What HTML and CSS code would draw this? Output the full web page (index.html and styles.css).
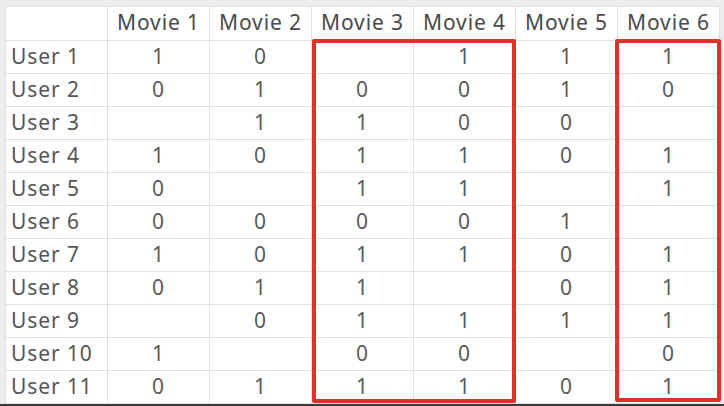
FILE: index.html
```html
<!DOCTYPE html>
<html>
<head>
<meta charset="utf-8">
<link rel="stylesheet" href="styles.css">
</head>
<body>
<div class="frame">
  <div class="sheet">
    <table class="grid">
      <thead>
        <tr><th class="corner"></th><th>Movie 1</th><th>Movie 2</th><th>Movie 3</th><th>Movie 4</th><th>Movie 5</th><th>Movie 6</th></tr>
      </thead>
      <tbody>
        <tr><td class="user">User 1</td><td>1</td><td>0</td><td></td><td>1</td><td>1</td><td>1</td></tr>
        <tr><td class="user">User 2</td><td>0</td><td>1</td><td>0</td><td>0</td><td>1</td><td>0</td></tr>
        <tr><td class="user">User 3</td><td></td><td>1</td><td>1</td><td>0</td><td>0</td><td></td></tr>
        <tr><td class="user">User 4</td><td>1</td><td>0</td><td>1</td><td>1</td><td>0</td><td>1</td></tr>
        <tr><td class="user">User 5</td><td>0</td><td></td><td>1</td><td>1</td><td></td><td>1</td></tr>
        <tr><td class="user">User 6</td><td>0</td><td>0</td><td>0</td><td>0</td><td>1</td><td></td></tr>
        <tr><td class="user">User 7</td><td>1</td><td>0</td><td>1</td><td>1</td><td>0</td><td>1</td></tr>
        <tr><td class="user">User 8</td><td>0</td><td>1</td><td>1</td><td></td><td>0</td><td>1</td></tr>
        <tr><td class="user">User 9</td><td></td><td>0</td><td>1</td><td>1</td><td>1</td><td>1</td></tr>
        <tr><td class="user">User 10</td><td>1</td><td></td><td>0</td><td>0</td><td></td><td>0</td></tr>
        <tr><td class="user">User 11</td><td>0</td><td>1</td><td>1</td><td>1</td><td>0</td><td>1</td></tr>
      </tbody>
    </table>
    <div class="mark mark-a"></div>
    <div class="mark mark-b"></div>
  </div>
  <div class="edge"></div>
</div>
</body>
</html>
```
FILE: styles.css
```css
html, body {
  margin: 0;
  padding: 0;
  background: #ececec;
}
body {
  width: 724px;
  height: 406px;
  overflow: hidden;
  font-family: "Noto Sans", "Open Sans", sans-serif;
}
.frame {
  display: flex;
  flex-direction: column;
  padding: 6px 0 0 5px;
}
.sheet {
  position: relative;
  width: 714px;
  background: #fff;
}
.grid {
  border-collapse: collapse;
  table-layout: fixed;
  width: 714px;
  color: #5a5a5a;
  font-size: 21px;
  letter-spacing: 0.9px;
}
.grid th, .grid td {
  width: 102px;
  border: 1px solid #e0e0e0;
  text-align: center;
  padding: 0 0 3px 0;
  font-weight: 400;
  white-space: nowrap;
  box-sizing: border-box;
}
.grid th {
  height: 34px;
  color: #4a4a4a;
}
.grid td {
  height: 33px;
}
.grid td.user {
  text-align: left;
  padding-left: 5px;
  color: #555;
}
.edge {
  height: 3px;
  background: #3a3a3a;
  margin-left: -5px;
}
.mark {
  position: absolute;
  border: 4px solid #e0302a;
  border-radius: 2px;
}
.mark-a {
  left: 307px;
  top: 33px;
  width: 196px;
  height: 356px;
}
.mark-b {
  left: 610px;
  top: 33px;
  width: 98px;
  height: 355px;
}
```
